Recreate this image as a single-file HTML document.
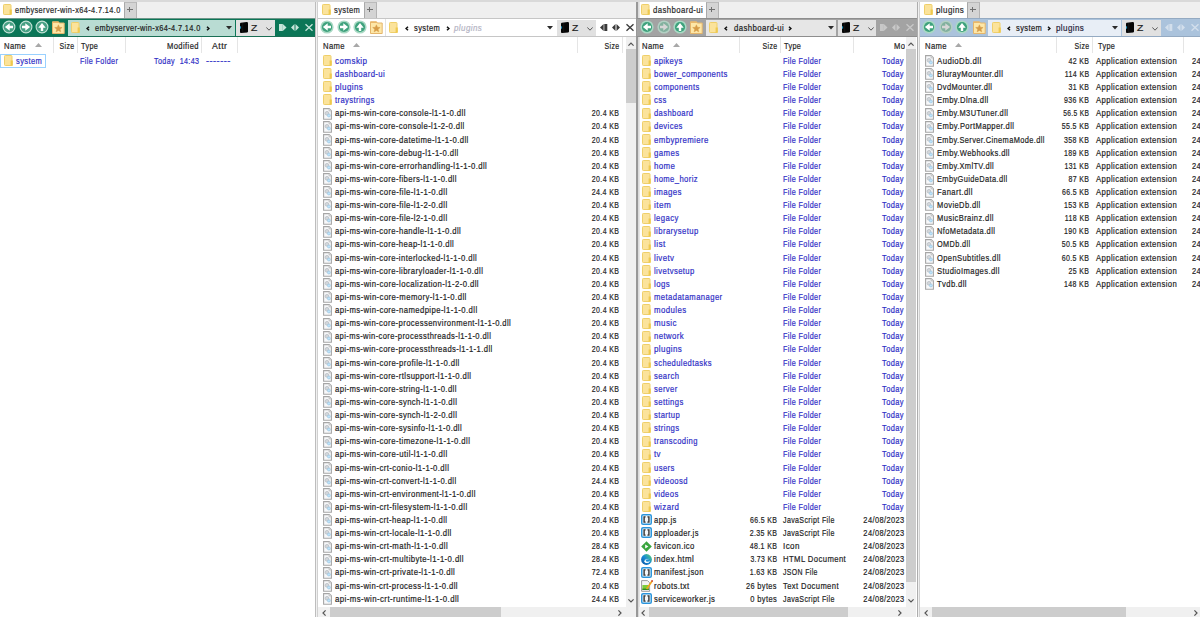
<!DOCTYPE html><html><head><meta charset="utf-8"><style>
html,body{margin:0;padding:0}
body{width:1200px;height:617px;position:relative;overflow:hidden;background:#fff;font-family:"Liberation Sans",sans-serif;font-size:9.5px}
.b{position:absolute}
.t{position:absolute;white-space:pre;line-height:13px;height:13px;transform-origin:0 0;color:#1f1f1f;-webkit-text-stroke:.22px currentColor}
.t.r{transform-origin:100% 0}
.i{position:absolute;overflow:visible}
</style></head><body>
<svg width="0" height="0" style="position:absolute">
<defs>
<symbol id="fold" viewBox="0 0 9 11"><rect x=".5" y=".5" width="7.5" height="10" rx=".8" fill="#fbe39b" stroke="#efcf6a" stroke-width="1"/><rect x="6.6" y="5.5" width="2.2" height="5.3" fill="#efc94e"/></symbol>
<symbol id="dll" viewBox="0 0 9 12"><path d="M.6 .6H6.2L8.4 2.8V11.2H.6Z" fill="#f7f8fa" stroke="#a6a6a6" stroke-width="1.1"/><path d="M6 .6V3H8.4" fill="#ddd" stroke="#b5b5b5" stroke-width=".6"/><circle cx="4" cy="5.3" r="1.9" fill="#d3d7db" stroke="#b4bac0" stroke-width=".7"/><circle cx="5.9" cy="7.5" r="1.5" fill="#bfe4fa" stroke="#93c0de" stroke-width=".6"/></symbol>
<symbol id="js" viewBox="0 0 11 11"><rect x=".75" y=".75" width="9.5" height="9.5" rx="1.3" fill="#f4f8fb" stroke="#2b95dc" stroke-width="1.5"/><path d="M4.6 2.9H3.1V8.1H4.6M6.4 2.9H7.9V8.1H6.4" fill="none" stroke="#333" stroke-width="1.4"/></symbol>
<symbol id="ico" viewBox="0 0 11 11"><path d="M5.5 .2L10.8 5.5L5.5 10.8L.2 5.5Z" fill="#3aa53e"/><path d="M4.2 3.5L7.4 5.5L4.2 7.5Z" fill="#fff"/></symbol>
<symbol id="edge" viewBox="0 0 11 11"><defs><linearGradient id="eg" x1="0" y1="1" x2="1" y2="0"><stop offset="0" stop-color="#0b4f9c"/><stop offset=".5" stop-color="#178ad6"/><stop offset="1" stop-color="#5fd66a"/></linearGradient></defs><circle cx="5.5" cy="5.5" r="5.4" fill="url(#eg)"/><path d="M3.2 7.2Q3.6 4.6 6.4 4.7Q9.6 4.9 10.8 6.6Q10.2 4.8 8.8 4.4Q5.6 3.6 4 5.2Q2.9 6.4 3.2 7.2Z" fill="#3ec7c0" opacity=".6"/><ellipse cx="5.9" cy="7.2" rx="2.5" ry="1.9" fill="#fff"/><ellipse cx="6.6" cy="6.6" rx="1.9" ry="1.2" fill="#1d8fd6"/></symbol>
<symbol id="txt" viewBox="0 0 12 12"><path d="M.6 .6H6.5L8.6 2.7V11.3H.6Z" fill="#f4f4f4" stroke="#9a9a9a" stroke-width="1"/><rect x="1.4" y="5" width="6.4" height="5" fill="#7dcc3a"/><rect x="1.4" y="8.6" width="6.4" height="1.4" fill="#2f8a1f"/><path d="M11.3 .8L5.6 9" stroke="#f1a51c" stroke-width="1.6"/><rect x="10.4" y=".2" width="1.5" height="1.5" fill="#c5333c"/></symbol>
<symbol id="up" viewBox="0 0 6 4"><path d="M.4 3.6L3 1L5.6 3.6" fill="none" stroke="#555" stroke-width="1.2"/></symbol>
<symbol id="dn" viewBox="0 0 6 4"><path d="M.4 .4L3 3L5.6 .4" fill="none" stroke="#555" stroke-width="1.2"/></symbol>
<symbol id="hl" viewBox="0 0 4 6"><path d="M3.6 .4L1 3L3.6 5.6" fill="none" stroke="#555" stroke-width="1.2"/></symbol>
<symbol id="hr" viewBox="0 0 4 6"><path d="M.4 .4L3 3L.4 5.6" fill="none" stroke="#555" stroke-width="1.2"/></symbol>
<symbol id="navL" viewBox="0 0 14 14"><circle cx="7" cy="7" r="6.6" fill="#a9d9c4"/><circle cx="7" cy="7" r="5.1" fill="#3fa27d"/><path d="M2.9 7L7.7 3.3V5.8H11V8.2H7.7V10.7Z" fill="#fff"/></symbol>
<symbol id="navR" viewBox="0 0 14 14"><circle cx="7" cy="7" r="6.6" fill="#a9d9c4"/><circle cx="7" cy="7" r="5.1" fill="#3fa27d"/><path d="M11.1 7L6.3 3.3V5.8H3V8.2H6.3V10.7Z" fill="#fff"/></symbol>
<symbol id="navU" viewBox="0 0 14 14"><circle cx="7" cy="7" r="6.6" fill="#a9d9c4"/><circle cx="7" cy="7" r="5.1" fill="#3fa27d"/><path d="M7 2.9L10.7 7.7H8.2V11H5.8V7.7H3.3Z" fill="#fff"/></symbol>
<symbol id="navRd" viewBox="0 0 14 14"><circle cx="7" cy="7" r="6.6" fill="#b3cfc3"/><circle cx="7" cy="7" r="5.1" fill="#82b19e"/><path d="M11.1 7L6.3 3.3V5.8H3V8.2H6.3V10.7Z" fill="#d6d6d6"/></symbol>
<symbol id="gL" viewBox="0 0 14 14"><circle cx="7" cy="7" r="5.9" fill="#47a084" stroke="#c3e2d6" stroke-width="1.1"/><path d="M2.9 7L7.7 3.3V5.8H11V8.2H7.7V10.7Z" fill="#fff"/></symbol>
<symbol id="gR" viewBox="0 0 14 14"><circle cx="7" cy="7" r="5.9" fill="#47a084" stroke="#c3e2d6" stroke-width="1.1"/><path d="M11.1 7L6.3 3.3V5.8H3V8.2H6.3V10.7Z" fill="#fff"/></symbol>
<symbol id="gU" viewBox="0 0 14 14"><circle cx="7" cy="7" r="5.9" fill="#47a084" stroke="#c3e2d6" stroke-width="1.1"/><path d="M7 2.9L10.7 7.7H8.2V11H5.8V7.7H3.3Z" fill="#fff"/></symbol>
<symbol id="star" viewBox="0 0 13 13"><path d="M.5 .8H6.5L7.3 2H12.2V12.5H.5Z" fill="#fde7a8" stroke="#e5b56a" stroke-width="1"/><path d="M.5 .8H6.5L7.3 2H.5Z" fill="#eab86a"/><path d="M6.40 3.80L7.43 6.28L10.11 6.49L8.06 8.24L8.69 10.86L6.40 9.45L4.11 10.86L4.74 8.24L2.69 6.49L5.37 6.28Z" fill="#d69c48" stroke="#d69c48" stroke-width=".5" stroke-linejoin="round"/></symbol>
<symbol id="drive" viewBox="0 0 8 11"><path d="M0 1.6Q0 .9 .8 .8L6.6 .1Q8 0 8 1.3V9.5Q8 10.3 7.2 10.4L1 11Q0 11 0 10.2Z" fill="#050505"/><rect x="0" y="4.3" width="1.1" height="2.4" fill="#1e90b8"/><rect x="2.6" y="1" width=".5" height="9.6" fill="#222"/></symbol>
<symbol id="lt" viewBox="0 0 4 5"><path d="M3 .7L1.1 2.5L3 4.3" fill="none" stroke="#111" stroke-width="1.5"/></symbol>
<symbol id="gt" viewBox="0 0 4 5"><path d="M1 .7L2.9 2.5L1 4.3" fill="none" stroke="#111" stroke-width="1.5"/></symbol>
<symbol id="tri" viewBox="0 0 6 4"><path d="M0 0H6L3 3.5Z" fill="#2b2b2b"/></symbol>
<symbol id="chev" viewBox="0 0 6 4"><path d="M.3 .4L3 3.2L5.7 .4" fill="none" stroke="#555" stroke-width="1"/></symbol>
<symbol id="sort" viewBox="0 0 7 4"><path d="M0 4L3.5 0L7 4Z" fill="#a8a8a8"/></symbol>
</defs></svg>

<div class="b" style="left:0px;top:0px;width:1200px;height:2px;background:#d9d9d9;"></div>
<div class="b" style="left:0px;top:2px;width:315px;height:16px;background:#efefef;"></div>
<div class="b" style="left:0px;top:2px;width:124px;height:16px;background:#ffffff;"></div>
<svg class="i" style="left:3px;top:4px" width="9" height="11"><use href="#fold"/></svg>
<div class="t " style="top:2.60px;transform:scaleX(0.774);letter-spacing:0.5px;left:14.70px;color:#2a2a2a;">embyserver-win-x64-4.7.14.0</div>
<div class="b" style="left:124px;top:1.5px;width:13px;height:16.5px;background:#d4d4d4;box-sizing:border-box;border-left:1px solid #a9a9a9;border-right:1px solid #b4b4b4;border-top:1px solid #bbbbbb"></div>
<div class="b" style="left:126.9px;top:9px;width:5.8px;height:1.2px;background:#707070;"></div>
<div class="b" style="left:129.2px;top:6.7px;width:1.2px;height:5.8px;background:#707070;"></div>
<div class="b" style="left:318px;top:2px;width:318px;height:16px;background:#efefef;"></div>
<div class="b" style="left:318px;top:2px;width:46px;height:16px;background:#ffffff;"></div>
<svg class="i" style="left:322px;top:4px" width="9" height="11"><use href="#fold"/></svg>
<div class="t " style="top:2.60px;transform:scaleX(0.792);letter-spacing:0.5px;left:333.70px;color:#2a2a2a;">system</div>
<div class="b" style="left:364px;top:1.5px;width:13px;height:16.5px;background:#d4d4d4;box-sizing:border-box;border-left:1px solid #a9a9a9;border-right:1px solid #b4b4b4;border-top:1px solid #bbbbbb"></div>
<div class="b" style="left:366.9px;top:9px;width:5.8px;height:1.2px;background:#707070;"></div>
<div class="b" style="left:369.2px;top:6.7px;width:1.2px;height:5.8px;background:#707070;"></div>
<div class="b" style="left:639px;top:2px;width:278px;height:16px;background:#efefef;"></div>
<div class="b" style="left:639px;top:2px;width:67px;height:16px;background:#ffffff;"></div>
<svg class="i" style="left:641px;top:4px" width="9" height="11"><use href="#fold"/></svg>
<div class="t " style="top:2.60px;transform:scaleX(0.817);letter-spacing:0.5px;left:652.50px;color:#2a2a2a;">dashboard-ui</div>
<div class="b" style="left:706px;top:1.5px;width:13px;height:16.5px;background:#d4d4d4;box-sizing:border-box;border-left:1px solid #a9a9a9;border-right:1px solid #b4b4b4;border-top:1px solid #bbbbbb"></div>
<div class="b" style="left:708.9px;top:9px;width:5.8px;height:1.2px;background:#707070;"></div>
<div class="b" style="left:711.2px;top:6.7px;width:1.2px;height:5.8px;background:#707070;"></div>
<div class="b" style="left:920px;top:2px;width:280px;height:16px;background:#efefef;"></div>
<div class="b" style="left:920px;top:2px;width:47px;height:16px;background:#ffffff;"></div>
<svg class="i" style="left:924.3px;top:4px" width="9" height="11"><use href="#fold"/></svg>
<div class="t " style="top:2.60px;transform:scaleX(0.840);letter-spacing:0.5px;left:935.70px;color:#2a2a2a;">plugins</div>
<div class="b" style="left:967px;top:1.5px;width:13px;height:16.5px;background:#d4d4d4;box-sizing:border-box;border-left:1px solid #a9a9a9;border-right:1px solid #b4b4b4;border-top:1px solid #bbbbbb"></div>
<div class="b" style="left:969.9px;top:9px;width:5.8px;height:1.2px;background:#707070;"></div>
<div class="b" style="left:972.2px;top:6.7px;width:1.2px;height:5.8px;background:#707070;"></div>
<div class="b" style="left:315px;top:2px;width:1px;height:615px;background:#bdbdbd;"></div>
<div class="b" style="left:316px;top:2px;width:1px;height:615px;background:#f0f0f0;"></div>
<div class="b" style="left:317px;top:2px;width:1px;height:615px;background:#d0d0d0;"></div>
<div class="b" style="left:636px;top:2px;width:2px;height:615px;background:#989898;"></div>
<div class="b" style="left:638px;top:2px;width:2px;height:615px;background:linear-gradient(90deg,#d4d4d4,#ececec);"></div>
<div class="b" style="left:917px;top:2px;width:1px;height:615px;background:#adadad;"></div>
<div class="b" style="left:918px;top:2px;width:1px;height:615px;background:#f0f0f0;"></div>
<div class="b" style="left:919px;top:2px;width:1px;height:615px;background:#d0d0d0;"></div>
<div class="b" style="left:0px;top:18px;width:315px;height:19px;background:#0b7657;"></div>
<div class="b" style="left:0px;top:18px;width:315px;height:1px;background:#6f978a;"></div>
<div class="b" style="left:0px;top:36px;width:315px;height:1px;background:#1a6f55;"></div>
<div class="b" style="left:68px;top:20px;width:166.5px;height:15.5px;background:#b9dcd3;"></div>
<div class="b" style="left:236px;top:20px;width:38.5px;height:15.5px;background:#e1e1e1;"></div>
<div class="b" style="left:318px;top:18px;width:318px;height:19px;background:#ffffff;"></div>
<div class="b" style="left:318px;top:18px;width:318px;height:1px;background:#c6c6c6;"></div>
<div class="b" style="left:318px;top:36px;width:318px;height:1px;background:#c6c6c6;"></div>
<div class="b" style="left:386px;top:20px;width:170px;height:15.5px;background:#ffffff;"></div>
<div class="b" style="left:557px;top:20px;width:38.5px;height:15.5px;background:#e1e1e1;"></div>
<div class="b" style="left:637px;top:18px;width:280px;height:19px;background:#a3a3a3;"></div>
<div class="b" style="left:637px;top:18px;width:280px;height:1px;background:#8e8e8e;"></div>
<div class="b" style="left:637px;top:36px;width:280px;height:1px;background:#8e8e8e;"></div>
<div class="b" style="left:706px;top:20px;width:130px;height:15.5px;background:#e6e6e6;"></div>
<div class="b" style="left:838px;top:20px;width:38.299999999999955px;height:15.5px;background:#e1e1e1;"></div>
<div class="b" style="left:920px;top:18px;width:280px;height:19px;background:#abc3dc;"></div>
<div class="b" style="left:920px;top:18px;width:280px;height:1px;background:#94aac2;"></div>
<div class="b" style="left:920px;top:36px;width:280px;height:1px;background:#94aac2;"></div>
<div class="b" style="left:988px;top:20px;width:133px;height:15.5px;background:#e8eef6;"></div>
<div class="b" style="left:1122px;top:20px;width:39px;height:15.5px;background:#e1e1e1;"></div>
<svg class="i" style="left:1.5px;top:20.2px" width="14" height="14"><use href="#gL"/></svg>
<svg class="i" style="left:19px;top:20.2px" width="14" height="14"><use href="#gR"/></svg>
<svg class="i" style="left:34.75px;top:20.2px" width="14" height="14"><use href="#gU"/></svg>
<svg class="i" style="left:52px;top:21px" width="13" height="13"><use href="#star"/></svg>
<svg class="i" style="left:71px;top:22px" width="9" height="11"><use href="#fold"/></svg>
<svg class="i" style="left:86px;top:25.5px" width="4" height="5"><use href="#lt"/></svg>
<div class="t " style="top:20.70px;transform:scaleX(0.774);letter-spacing:0.5px;left:95.00px;color:#1c1c1c;">embyserver-win-x64-4.7.14.0</div>
<svg class="i" style="left:206px;top:25.5px" width="4" height="5"><use href="#gt"/></svg>
<svg class="i" style="left:225.5px;top:26px" width="6" height="4"><use href="#tri"/></svg>
<svg class="i" style="left:240px;top:22px" width="8" height="11"><use href="#drive"/></svg>
<div class="t " style="top:20.70px;transform:scaleX(1.086);letter-spacing:0.5px;left:250.50px;color:#222;">Z</div>
<svg class="i" style="left:265.5px;top:26.5px" width="6" height="4"><use href="#chev"/></svg>
<svg class="i" style="left:279px;top:24px" width="8" height="7" viewBox="0 0 8 7"><rect x="0" y="0" width="3.8" height="7" fill="#c6e5da"/><path d="M3.8 0L7.5 3.5L3.8 7Z" fill="#c6e5da"/><rect x="2.2" y="0" width=".9" height="7" fill="#c6e5da" opacity=".4"/></svg>
<svg class="i" style="left:291px;top:24px" width="8" height="7" viewBox="0 0 8 7"><path d="M3.5 0L0 3.5L3.5 7Z" fill="#c6e5da"/><path d="M4.5 0L8 3.5L4.5 7Z" fill="#c6e5da"/></svg>
<svg class="i" style="left:305px;top:24px" width="8" height="7" viewBox="0 0 8 7"><path d="M.5 .3L7.5 6.7M7.5 .3L.5 6.7" stroke="#c6e5da" stroke-width="1.35"/></svg>
<svg class="i" style="left:320px;top:20.2px" width="14" height="14"><use href="#navL"/></svg>
<svg class="i" style="left:337px;top:20.2px" width="14" height="14"><use href="#navR"/></svg>
<svg class="i" style="left:353px;top:20.2px" width="14" height="14"><use href="#navU"/></svg>
<svg class="i" style="left:370px;top:21px" width="13" height="13"><use href="#star"/></svg>
<div class="b" style="left:385px;top:19px;width:1px;height:17px;background:#e3e3e3;"></div>
<svg class="i" style="left:389px;top:22px" width="9" height="11"><use href="#fold"/></svg>
<svg class="i" style="left:404.5px;top:25.5px" width="4" height="5"><use href="#lt"/></svg>
<div class="t " style="top:20.70px;transform:scaleX(0.792);letter-spacing:0.5px;left:414.00px;color:#1c1c1c;">system</div>
<svg class="i" style="left:445.5px;top:25.5px" width="4" height="5"><use href="#gt"/></svg>
<div class="t " style="top:20.70px;transform:scaleX(0.840);letter-spacing:0.5px;left:454.00px;color:#b4b4c4;font-style:italic">plugins</div>
<svg class="i" style="left:546.5px;top:26px" width="6" height="4"><use href="#tri"/></svg>
<svg class="i" style="left:561px;top:22px" width="8" height="11"><use href="#drive"/></svg>
<div class="t " style="top:20.70px;transform:scaleX(1.086);letter-spacing:0.5px;left:571.50px;color:#222;">Z</div>
<svg class="i" style="left:586.5px;top:26.5px" width="6" height="4"><use href="#chev"/></svg>
<svg class="i" style="left:600px;top:24px" width="8" height="7" viewBox="0 0 8 7"><path d="M3.6 0L0 3.5L3.6 7Z" fill="#3a3a3a"/><rect x="4.3" y="0" width="3" height="7" fill="#3a3a3a"/></svg>
<svg class="i" style="left:612px;top:24px" width="8" height="7" viewBox="0 0 8 7"><path d="M3.5 0L0 3.5L3.5 7Z" fill="#3a3a3a"/><path d="M4.5 0L8 3.5L4.5 7Z" fill="#3a3a3a"/></svg>
<svg class="i" style="left:626px;top:24px" width="8" height="7" viewBox="0 0 8 7"><path d="M.5 .3L7.5 6.7M7.5 .3L.5 6.7" stroke="#3a3a3a" stroke-width="1.35"/></svg>
<svg class="i" style="left:639.8px;top:20.2px" width="14" height="14"><use href="#navL"/></svg>
<svg class="i" style="left:657px;top:20.2px" width="14" height="14"><use href="#navRd"/></svg>
<svg class="i" style="left:672.8px;top:20.2px" width="14" height="14"><use href="#navU"/></svg>
<svg class="i" style="left:690px;top:21px" width="13" height="13"><use href="#star"/></svg>
<svg class="i" style="left:709px;top:22px" width="9" height="11"><use href="#fold"/></svg>
<svg class="i" style="left:724px;top:25.5px" width="4" height="5"><use href="#lt"/></svg>
<div class="t " style="top:20.70px;transform:scaleX(0.817);letter-spacing:0.5px;left:734.00px;color:#1c1c1c;">dashboard-ui</div>
<svg class="i" style="left:787.5px;top:25.5px" width="4" height="5"><use href="#gt"/></svg>
<svg class="i" style="left:827.5px;top:26px" width="6" height="4"><use href="#tri"/></svg>
<svg class="i" style="left:842px;top:22px" width="8" height="11"><use href="#drive"/></svg>
<div class="t " style="top:20.70px;transform:scaleX(1.086);letter-spacing:0.5px;left:852.50px;color:#222;">Z</div>
<svg class="i" style="left:867.5px;top:26.5px" width="6" height="4"><use href="#chev"/></svg>
<svg class="i" style="left:880px;top:24px" width="8" height="7" viewBox="0 0 8 7"><rect x="0" y="0" width="3.8" height="7" fill="#c8c8c8"/><path d="M3.8 0L7.5 3.5L3.8 7Z" fill="#c8c8c8"/><rect x="2.2" y="0" width=".9" height="7" fill="#c8c8c8" opacity=".4"/></svg>
<svg class="i" style="left:892px;top:24px" width="8" height="7" viewBox="0 0 8 7"><path d="M3.5 0L0 3.5L3.5 7Z" fill="#c8c8c8"/><path d="M4.5 0L8 3.5L4.5 7Z" fill="#c8c8c8"/></svg>
<svg class="i" style="left:906px;top:24px" width="8" height="7" viewBox="0 0 8 7"><path d="M.5 .3L7.5 6.7M7.5 .3L.5 6.7" stroke="#c8c8c8" stroke-width="1.35"/></svg>
<svg class="i" style="left:922px;top:20.2px" width="14" height="14"><use href="#navL"/></svg>
<svg class="i" style="left:939px;top:20.2px" width="14" height="14"><use href="#navRd"/></svg>
<svg class="i" style="left:955px;top:20.2px" width="14" height="14"><use href="#navU"/></svg>
<svg class="i" style="left:972.5px;top:21px" width="13" height="13"><use href="#star"/></svg>
<svg class="i" style="left:991.5px;top:22px" width="9" height="11"><use href="#fold"/></svg>
<svg class="i" style="left:1006.5px;top:25.5px" width="4" height="5"><use href="#lt"/></svg>
<div class="t " style="top:20.70px;transform:scaleX(0.792);letter-spacing:0.5px;left:1016.00px;color:#1c1c1c;">system</div>
<svg class="i" style="left:1046.5px;top:25.5px" width="4" height="5"><use href="#gt"/></svg>
<div class="t " style="top:20.70px;transform:scaleX(0.840);letter-spacing:0.5px;left:1056.00px;color:#2a1f3a;">plugins</div>
<svg class="i" style="left:1111.5px;top:26px" width="6" height="4"><use href="#tri"/></svg>
<svg class="i" style="left:1126px;top:22px" width="8" height="11"><use href="#drive"/></svg>
<div class="t " style="top:20.70px;transform:scaleX(1.086);letter-spacing:0.5px;left:1136.50px;color:#222;">Z</div>
<svg class="i" style="left:1151.5px;top:26.5px" width="6" height="4"><use href="#chev"/></svg>
<svg class="i" style="left:1165px;top:24px" width="8" height="7" viewBox="0 0 8 7"><path d="M3.6 0L0 3.5L3.6 7Z" fill="#d3dfec"/><rect x="4.3" y="0" width="3" height="7" fill="#d3dfec"/></svg>
<svg class="i" style="left:1177px;top:24px" width="8" height="7" viewBox="0 0 8 7"><path d="M3.5 0L0 3.5L3.5 7Z" fill="#d3dfec"/><path d="M4.5 0L8 3.5L4.5 7Z" fill="#d3dfec"/></svg>
<svg class="i" style="left:1191px;top:24px" width="8" height="7" viewBox="0 0 8 7"><path d="M.5 .3L7.5 6.7M7.5 .3L.5 6.7" stroke="#d3dfec" stroke-width="1.35"/></svg>
<svg class="i" style="left:34.5px;top:43px" width="7" height="4"><use href="#sort"/></svg>
<svg class="i" style="left:353px;top:43px" width="7" height="4"><use href="#sort"/></svg>
<svg class="i" style="left:672.7px;top:43px" width="7" height="4"><use href="#sort"/></svg>
<svg class="i" style="left:955px;top:43px" width="7" height="4"><use href="#sort"/></svg>
<div class="t " style="top:38.60px;transform:scaleX(0.805);letter-spacing:0.5px;left:4.00px;color:#262626;">Name</div>
<div class="b" style="left:52.5px;top:37px;width:1px;height:16px;background:#e5e5e5;"></div>
<div class="t r " style="top:38.60px;transform:scaleX(0.731);letter-spacing:0.5px;right:1125.83px;color:#262626;">Size</div>
<div class="b" style="left:77px;top:37px;width:1px;height:16px;background:#e5e5e5;"></div>
<div class="t " style="top:38.60px;transform:scaleX(0.765);letter-spacing:0.5px;left:81.00px;color:#262626;">Type</div>
<div class="b" style="left:125px;top:37px;width:1px;height:16px;background:#e5e5e5;"></div>
<div class="t r " style="top:38.60px;transform:scaleX(0.799);letter-spacing:0.5px;right:1000.80px;color:#262626;">Modified</div>
<div class="b" style="left:201px;top:37px;width:1px;height:16px;background:#e5e5e5;"></div>
<div class="t " style="top:38.60px;transform:scaleX(0.915);letter-spacing:0.5px;left:212.30px;color:#262626;">Attr</div>
<div class="b" style="left:237px;top:37px;width:1px;height:16px;background:#e5e5e5;"></div>
<div class="b" style="left:0px;top:54px;width:46px;height:14px;background:transparent;box-sizing:border-box;border:1px solid #99d1ff"></div>
<svg class="i" style="left:4px;top:55px" width="9" height="11"><use href="#fold"/></svg>
<div class="t " style="top:53.80px;transform:scaleX(0.792);letter-spacing:0.5px;left:16.00px;color:#3030c6;">system</div>
<div class="t " style="top:53.80px;transform:scaleX(0.758);letter-spacing:0.5px;left:80.00px;color:#3030c6;">File Folder</div>
<div class="t r " style="top:53.80px;transform:scaleX(0.751);letter-spacing:0.5px;right:1000.82px;color:#3030c6;">Today  14:43</div>
<div class="t " style="top:53.80px;transform:scaleX(0.966);letter-spacing:0.5px;left:206.00px;color:#3030c6;">-------</div>
<div class="t " style="top:38.60px;transform:scaleX(0.805);letter-spacing:0.5px;left:323.00px;color:#262626;">Name</div>
<div class="b" style="left:577px;top:37px;width:1px;height:16px;background:#e5e5e5;"></div>
<div class="t r " style="top:38.60px;transform:scaleX(0.731);letter-spacing:0.5px;right:580.83px;color:#262626;">Size</div>
<div class="b" style="left:621.5px;top:37px;width:1px;height:16px;background:#e5e5e5;"></div>
<svg class="i" style="left:323px;top:55.1px" width="9" height="11"><use href="#fold"/></svg>
<div class="t " style="top:53.80px;transform:scaleX(0.846);letter-spacing:0.5px;left:335.00px;color:#3030c6;">comskip</div>
<svg class="i" style="left:323px;top:68.22px" width="9" height="11"><use href="#fold"/></svg>
<div class="t " style="top:66.92px;transform:scaleX(0.817);letter-spacing:0.5px;left:335.00px;color:#3030c6;">dashboard-ui</div>
<svg class="i" style="left:323px;top:81.33999999999999px" width="9" height="11"><use href="#fold"/></svg>
<div class="t " style="top:80.04px;transform:scaleX(0.840);letter-spacing:0.5px;left:335.00px;color:#3030c6;">plugins</div>
<svg class="i" style="left:323px;top:94.46px" width="9" height="11"><use href="#fold"/></svg>
<div class="t " style="top:93.16px;transform:scaleX(0.803);letter-spacing:0.5px;left:335.00px;color:#3030c6;">traystrings</div>
<svg class="i" style="left:323px;top:107.57999999999998px" width="9" height="12"><use href="#dll"/></svg>
<div class="t " style="top:106.28px;transform:scaleX(0.817);letter-spacing:0.5px;left:335.00px;color:#1f1f1f;">api-ms-win-core-console-l1-1-0.dll</div>
<div class="t r " style="top:106.28px;transform:scaleX(0.736);letter-spacing:0.5px;right:580.83px;color:#1f1f1f;">20.4 KB</div>
<svg class="i" style="left:323px;top:120.69999999999999px" width="9" height="12"><use href="#dll"/></svg>
<div class="t " style="top:119.40px;transform:scaleX(0.810);letter-spacing:0.5px;left:335.00px;color:#1f1f1f;">api-ms-win-core-console-l1-2-0.dll</div>
<div class="t r " style="top:119.40px;transform:scaleX(0.736);letter-spacing:0.5px;right:580.83px;color:#1f1f1f;">20.4 KB</div>
<svg class="i" style="left:323px;top:133.82px" width="9" height="12"><use href="#dll"/></svg>
<div class="t " style="top:132.52px;transform:scaleX(0.814);letter-spacing:0.5px;left:335.00px;color:#1f1f1f;">api-ms-win-core-datetime-l1-1-0.dll</div>
<div class="t r " style="top:132.52px;transform:scaleX(0.736);letter-spacing:0.5px;right:580.83px;color:#1f1f1f;">20.4 KB</div>
<svg class="i" style="left:323px;top:146.93999999999997px" width="9" height="12"><use href="#dll"/></svg>
<div class="t " style="top:145.64px;transform:scaleX(0.810);letter-spacing:0.5px;left:335.00px;color:#1f1f1f;">api-ms-win-core-debug-l1-1-0.dll</div>
<div class="t r " style="top:145.64px;transform:scaleX(0.736);letter-spacing:0.5px;right:580.83px;color:#1f1f1f;">20.4 KB</div>
<svg class="i" style="left:323px;top:160.05999999999997px" width="9" height="12"><use href="#dll"/></svg>
<div class="t " style="top:158.76px;transform:scaleX(0.817);letter-spacing:0.5px;left:335.00px;color:#1f1f1f;">api-ms-win-core-errorhandling-l1-1-0.dll</div>
<div class="t r " style="top:158.76px;transform:scaleX(0.736);letter-spacing:0.5px;right:580.83px;color:#1f1f1f;">20.4 KB</div>
<svg class="i" style="left:323px;top:173.17999999999998px" width="9" height="12"><use href="#dll"/></svg>
<div class="t " style="top:171.88px;transform:scaleX(0.812);letter-spacing:0.5px;left:335.00px;color:#1f1f1f;">api-ms-win-core-fibers-l1-1-0.dll</div>
<div class="t r " style="top:171.88px;transform:scaleX(0.736);letter-spacing:0.5px;right:580.83px;color:#1f1f1f;">20.4 KB</div>
<svg class="i" style="left:323px;top:186.29999999999998px" width="9" height="12"><use href="#dll"/></svg>
<div class="t " style="top:185.00px;transform:scaleX(0.816);letter-spacing:0.5px;left:335.00px;color:#1f1f1f;">api-ms-win-core-file-l1-1-0.dll</div>
<div class="t r " style="top:185.00px;transform:scaleX(0.741);letter-spacing:0.5px;right:580.83px;color:#1f1f1f;">24.4 KB</div>
<svg class="i" style="left:323px;top:199.42px" width="9" height="12"><use href="#dll"/></svg>
<div class="t " style="top:198.12px;transform:scaleX(0.816);letter-spacing:0.5px;left:335.00px;color:#1f1f1f;">api-ms-win-core-file-l1-2-0.dll</div>
<div class="t r " style="top:198.12px;transform:scaleX(0.736);letter-spacing:0.5px;right:580.83px;color:#1f1f1f;">20.4 KB</div>
<svg class="i" style="left:323px;top:212.54px" width="9" height="12"><use href="#dll"/></svg>
<div class="t " style="top:211.24px;transform:scaleX(0.816);letter-spacing:0.5px;left:335.00px;color:#1f1f1f;">api-ms-win-core-file-l2-1-0.dll</div>
<div class="t r " style="top:211.24px;transform:scaleX(0.736);letter-spacing:0.5px;right:580.83px;color:#1f1f1f;">20.4 KB</div>
<svg class="i" style="left:323px;top:225.66px" width="9" height="12"><use href="#dll"/></svg>
<div class="t " style="top:224.36px;transform:scaleX(0.812);letter-spacing:0.5px;left:335.00px;color:#1f1f1f;">api-ms-win-core-handle-l1-1-0.dll</div>
<div class="t r " style="top:224.36px;transform:scaleX(0.736);letter-spacing:0.5px;right:580.83px;color:#1f1f1f;">20.4 KB</div>
<svg class="i" style="left:323px;top:238.77999999999997px" width="9" height="12"><use href="#dll"/></svg>
<div class="t " style="top:237.48px;transform:scaleX(0.811);letter-spacing:0.5px;left:335.00px;color:#1f1f1f;">api-ms-win-core-heap-l1-1-0.dll</div>
<div class="t r " style="top:237.48px;transform:scaleX(0.736);letter-spacing:0.5px;right:580.83px;color:#1f1f1f;">20.4 KB</div>
<svg class="i" style="left:323px;top:251.89999999999998px" width="9" height="12"><use href="#dll"/></svg>
<div class="t " style="top:250.60px;transform:scaleX(0.811);letter-spacing:0.5px;left:335.00px;color:#1f1f1f;">api-ms-win-core-interlocked-l1-1-0.dll</div>
<div class="t r " style="top:250.60px;transform:scaleX(0.736);letter-spacing:0.5px;right:580.83px;color:#1f1f1f;">20.4 KB</div>
<svg class="i" style="left:323px;top:265.02px" width="9" height="12"><use href="#dll"/></svg>
<div class="t " style="top:263.72px;transform:scaleX(0.812);letter-spacing:0.5px;left:335.00px;color:#1f1f1f;">api-ms-win-core-libraryloader-l1-1-0.dll</div>
<div class="t r " style="top:263.72px;transform:scaleX(0.736);letter-spacing:0.5px;right:580.83px;color:#1f1f1f;">20.4 KB</div>
<svg class="i" style="left:323px;top:278.14px" width="9" height="12"><use href="#dll"/></svg>
<div class="t " style="top:276.84px;transform:scaleX(0.814);letter-spacing:0.5px;left:335.00px;color:#1f1f1f;">api-ms-win-core-localization-l1-2-0.dll</div>
<div class="t r " style="top:276.84px;transform:scaleX(0.736);letter-spacing:0.5px;right:580.83px;color:#1f1f1f;">20.4 KB</div>
<svg class="i" style="left:323px;top:291.26px" width="9" height="12"><use href="#dll"/></svg>
<div class="t " style="top:289.96px;transform:scaleX(0.817);letter-spacing:0.5px;left:335.00px;color:#1f1f1f;">api-ms-win-core-memory-l1-1-0.dll</div>
<div class="t r " style="top:289.96px;transform:scaleX(0.736);letter-spacing:0.5px;right:580.83px;color:#1f1f1f;">20.4 KB</div>
<svg class="i" style="left:323px;top:304.38px" width="9" height="12"><use href="#dll"/></svg>
<div class="t " style="top:303.08px;transform:scaleX(0.813);letter-spacing:0.5px;left:335.00px;color:#1f1f1f;">api-ms-win-core-namedpipe-l1-1-0.dll</div>
<div class="t r " style="top:303.08px;transform:scaleX(0.736);letter-spacing:0.5px;right:580.83px;color:#1f1f1f;">20.4 KB</div>
<svg class="i" style="left:323px;top:317.5px" width="9" height="12"><use href="#dll"/></svg>
<div class="t " style="top:316.20px;transform:scaleX(0.807);letter-spacing:0.5px;left:335.00px;color:#1f1f1f;">api-ms-win-core-processenvironment-l1-1-0.dll</div>
<div class="t r " style="top:316.20px;transform:scaleX(0.736);letter-spacing:0.5px;right:580.83px;color:#1f1f1f;">20.4 KB</div>
<svg class="i" style="left:323px;top:330.62px" width="9" height="12"><use href="#dll"/></svg>
<div class="t " style="top:329.32px;transform:scaleX(0.798);letter-spacing:0.5px;left:335.00px;color:#1f1f1f;">api-ms-win-core-processthreads-l1-1-0.dll</div>
<div class="t r " style="top:329.32px;transform:scaleX(0.736);letter-spacing:0.5px;right:580.83px;color:#1f1f1f;">20.4 KB</div>
<svg class="i" style="left:323px;top:343.74px" width="9" height="12"><use href="#dll"/></svg>
<div class="t " style="top:342.44px;transform:scaleX(0.805);letter-spacing:0.5px;left:335.00px;color:#1f1f1f;">api-ms-win-core-processthreads-l1-1-1.dll</div>
<div class="t r " style="top:342.44px;transform:scaleX(0.736);letter-spacing:0.5px;right:580.83px;color:#1f1f1f;">20.4 KB</div>
<svg class="i" style="left:323px;top:356.86px" width="9" height="12"><use href="#dll"/></svg>
<div class="t " style="top:355.56px;transform:scaleX(0.814);letter-spacing:0.5px;left:335.00px;color:#1f1f1f;">api-ms-win-core-profile-l1-1-0.dll</div>
<div class="t r " style="top:355.56px;transform:scaleX(0.736);letter-spacing:0.5px;right:580.83px;color:#1f1f1f;">20.4 KB</div>
<svg class="i" style="left:323px;top:369.98px" width="9" height="12"><use href="#dll"/></svg>
<div class="t " style="top:368.68px;transform:scaleX(0.810);letter-spacing:0.5px;left:335.00px;color:#1f1f1f;">api-ms-win-core-rtlsupport-l1-1-0.dll</div>
<div class="t r " style="top:368.68px;transform:scaleX(0.736);letter-spacing:0.5px;right:580.83px;color:#1f1f1f;">20.4 KB</div>
<svg class="i" style="left:323px;top:383.1px" width="9" height="12"><use href="#dll"/></svg>
<div class="t " style="top:381.80px;transform:scaleX(0.812);letter-spacing:0.5px;left:335.00px;color:#1f1f1f;">api-ms-win-core-string-l1-1-0.dll</div>
<div class="t r " style="top:381.80px;transform:scaleX(0.736);letter-spacing:0.5px;right:580.83px;color:#1f1f1f;">20.4 KB</div>
<svg class="i" style="left:323px;top:396.22px" width="9" height="12"><use href="#dll"/></svg>
<div class="t " style="top:394.92px;transform:scaleX(0.809);letter-spacing:0.5px;left:335.00px;color:#1f1f1f;">api-ms-win-core-synch-l1-1-0.dll</div>
<div class="t r " style="top:394.92px;transform:scaleX(0.736);letter-spacing:0.5px;right:580.83px;color:#1f1f1f;">20.4 KB</div>
<svg class="i" style="left:323px;top:409.34px" width="9" height="12"><use href="#dll"/></svg>
<div class="t " style="top:408.04px;transform:scaleX(0.809);letter-spacing:0.5px;left:335.00px;color:#1f1f1f;">api-ms-win-core-synch-l1-2-0.dll</div>
<div class="t r " style="top:408.04px;transform:scaleX(0.736);letter-spacing:0.5px;right:580.83px;color:#1f1f1f;">20.4 KB</div>
<svg class="i" style="left:323px;top:422.46px" width="9" height="12"><use href="#dll"/></svg>
<div class="t " style="top:421.16px;transform:scaleX(0.810);letter-spacing:0.5px;left:335.00px;color:#1f1f1f;">api-ms-win-core-sysinfo-l1-1-0.dll</div>
<div class="t r " style="top:421.16px;transform:scaleX(0.736);letter-spacing:0.5px;right:580.83px;color:#1f1f1f;">20.4 KB</div>
<svg class="i" style="left:323px;top:435.58px" width="9" height="12"><use href="#dll"/></svg>
<div class="t " style="top:434.28px;transform:scaleX(0.813);letter-spacing:0.5px;left:335.00px;color:#1f1f1f;">api-ms-win-core-timezone-l1-1-0.dll</div>
<div class="t r " style="top:434.28px;transform:scaleX(0.736);letter-spacing:0.5px;right:580.83px;color:#1f1f1f;">20.4 KB</div>
<svg class="i" style="left:323px;top:448.7px" width="9" height="12"><use href="#dll"/></svg>
<div class="t " style="top:447.40px;transform:scaleX(0.816);letter-spacing:0.5px;left:335.00px;color:#1f1f1f;">api-ms-win-core-util-l1-1-0.dll</div>
<div class="t r " style="top:447.40px;transform:scaleX(0.736);letter-spacing:0.5px;right:580.83px;color:#1f1f1f;">20.4 KB</div>
<svg class="i" style="left:323px;top:461.82px" width="9" height="12"><use href="#dll"/></svg>
<div class="t " style="top:460.52px;transform:scaleX(0.813);letter-spacing:0.5px;left:335.00px;color:#1f1f1f;">api-ms-win-crt-conio-l1-1-0.dll</div>
<div class="t r " style="top:460.52px;transform:scaleX(0.736);letter-spacing:0.5px;right:580.83px;color:#1f1f1f;">20.4 KB</div>
<svg class="i" style="left:323px;top:474.94px" width="9" height="12"><use href="#dll"/></svg>
<div class="t " style="top:473.64px;transform:scaleX(0.810);letter-spacing:0.5px;left:335.00px;color:#1f1f1f;">api-ms-win-crt-convert-l1-1-0.dll</div>
<div class="t r " style="top:473.64px;transform:scaleX(0.741);letter-spacing:0.5px;right:580.83px;color:#1f1f1f;">24.4 KB</div>
<svg class="i" style="left:323px;top:488.06px" width="9" height="12"><use href="#dll"/></svg>
<div class="t " style="top:486.76px;transform:scaleX(0.813);letter-spacing:0.5px;left:335.00px;color:#1f1f1f;">api-ms-win-crt-environment-l1-1-0.dll</div>
<div class="t r " style="top:486.76px;transform:scaleX(0.736);letter-spacing:0.5px;right:580.83px;color:#1f1f1f;">20.4 KB</div>
<svg class="i" style="left:323px;top:501.18px" width="9" height="12"><use href="#dll"/></svg>
<div class="t " style="top:499.88px;transform:scaleX(0.815);letter-spacing:0.5px;left:335.00px;color:#1f1f1f;">api-ms-win-crt-filesystem-l1-1-0.dll</div>
<div class="t r " style="top:499.88px;transform:scaleX(0.736);letter-spacing:0.5px;right:580.83px;color:#1f1f1f;">20.4 KB</div>
<svg class="i" style="left:323px;top:514.3000000000001px" width="9" height="12"><use href="#dll"/></svg>
<div class="t " style="top:513.00px;transform:scaleX(0.812);letter-spacing:0.5px;left:335.00px;color:#1f1f1f;">api-ms-win-crt-heap-l1-1-0.dll</div>
<div class="t r " style="top:513.00px;transform:scaleX(0.736);letter-spacing:0.5px;right:580.83px;color:#1f1f1f;">20.4 KB</div>
<svg class="i" style="left:323px;top:527.42px" width="9" height="12"><use href="#dll"/></svg>
<div class="t " style="top:526.12px;transform:scaleX(0.815);letter-spacing:0.5px;left:335.00px;color:#1f1f1f;">api-ms-win-crt-locale-l1-1-0.dll</div>
<div class="t r " style="top:526.12px;transform:scaleX(0.736);letter-spacing:0.5px;right:580.83px;color:#1f1f1f;">20.4 KB</div>
<svg class="i" style="left:323px;top:540.5400000000001px" width="9" height="12"><use href="#dll"/></svg>
<div class="t " style="top:539.24px;transform:scaleX(0.816);letter-spacing:0.5px;left:335.00px;color:#1f1f1f;">api-ms-win-crt-math-l1-1-0.dll</div>
<div class="t r " style="top:539.24px;transform:scaleX(0.741);letter-spacing:0.5px;right:580.83px;color:#1f1f1f;">28.4 KB</div>
<svg class="i" style="left:323px;top:553.66px" width="9" height="12"><use href="#dll"/></svg>
<div class="t " style="top:552.36px;transform:scaleX(0.816);letter-spacing:0.5px;left:335.00px;color:#1f1f1f;">api-ms-win-crt-multibyte-l1-1-0.dll</div>
<div class="t r " style="top:552.36px;transform:scaleX(0.741);letter-spacing:0.5px;right:580.83px;color:#1f1f1f;">28.4 KB</div>
<svg class="i" style="left:323px;top:566.78px" width="9" height="12"><use href="#dll"/></svg>
<div class="t " style="top:565.48px;transform:scaleX(0.815);letter-spacing:0.5px;left:335.00px;color:#1f1f1f;">api-ms-win-crt-private-l1-1-0.dll</div>
<div class="t r " style="top:565.48px;transform:scaleX(0.741);letter-spacing:0.5px;right:580.83px;color:#1f1f1f;">72.4 KB</div>
<svg class="i" style="left:323px;top:579.9px" width="9" height="12"><use href="#dll"/></svg>
<div class="t " style="top:578.60px;transform:scaleX(0.808);letter-spacing:0.5px;left:335.00px;color:#1f1f1f;">api-ms-win-crt-process-l1-1-0.dll</div>
<div class="t r " style="top:578.60px;transform:scaleX(0.736);letter-spacing:0.5px;right:580.83px;color:#1f1f1f;">20.4 KB</div>
<svg class="i" style="left:323px;top:593.02px" width="9" height="12"><use href="#dll"/></svg>
<div class="t " style="top:591.72px;transform:scaleX(0.825);letter-spacing:0.5px;left:335.00px;color:#1f1f1f;">api-ms-win-crt-runtime-l1-1-0.dll</div>
<div class="t r " style="top:591.72px;transform:scaleX(0.741);letter-spacing:0.5px;right:580.83px;color:#1f1f1f;">24.4 KB</div>
<div class="t " style="top:38.60px;transform:scaleX(0.805);letter-spacing:0.5px;left:642.00px;color:#262626;">Name</div>
<div class="b" style="left:739px;top:37px;width:1px;height:16px;background:#e5e5e5;"></div>
<div class="t r " style="top:38.60px;transform:scaleX(0.731);letter-spacing:0.5px;right:422.83px;color:#262626;">Size</div>
<div class="b" style="left:779.5px;top:37px;width:1px;height:16px;background:#e5e5e5;"></div>
<div class="t " style="top:38.60px;transform:scaleX(0.765);letter-spacing:0.5px;left:784.00px;color:#262626;">Type</div>
<div class="b" style="left:853px;top:37px;width:1px;height:16px;background:#e5e5e5;"></div>
<div class="b" style="left:0;top:0;width:905px;height:617px;overflow:hidden">
<div class="t " style="top:38.60px;transform:scaleX(0.799);letter-spacing:0.5px;left:893.50px;color:#262626;">Modified</div>
</div>
<svg class="i" style="left:642px;top:55.1px" width="9" height="11"><use href="#fold"/></svg>
<div class="t " style="top:53.80px;transform:scaleX(0.801);letter-spacing:0.5px;left:654.00px;color:#3030c6;">apikeys</div>
<div class="t " style="top:53.80px;transform:scaleX(0.758);letter-spacing:0.5px;left:783.00px;color:#3030c6;">File Folder</div>
<div class="t r " style="top:53.80px;transform:scaleX(0.783);letter-spacing:0.5px;right:295.81px;color:#3030c6;">Today</div>
<svg class="i" style="left:642px;top:68.22px" width="9" height="11"><use href="#fold"/></svg>
<div class="t " style="top:66.92px;transform:scaleX(0.812);letter-spacing:0.5px;left:654.00px;color:#3030c6;">bower_components</div>
<div class="t " style="top:66.92px;transform:scaleX(0.758);letter-spacing:0.5px;left:783.00px;color:#3030c6;">File Folder</div>
<div class="t r " style="top:66.92px;transform:scaleX(0.783);letter-spacing:0.5px;right:295.81px;color:#3030c6;">Today</div>
<svg class="i" style="left:642px;top:81.33999999999999px" width="9" height="11"><use href="#fold"/></svg>
<div class="t " style="top:80.04px;transform:scaleX(0.807);letter-spacing:0.5px;left:654.00px;color:#3030c6;">components</div>
<div class="t " style="top:80.04px;transform:scaleX(0.758);letter-spacing:0.5px;left:783.00px;color:#3030c6;">File Folder</div>
<div class="t r " style="top:80.04px;transform:scaleX(0.783);letter-spacing:0.5px;right:295.81px;color:#3030c6;">Today</div>
<svg class="i" style="left:642px;top:94.46px" width="9" height="11"><use href="#fold"/></svg>
<div class="t " style="top:93.16px;transform:scaleX(0.809);letter-spacing:0.5px;left:654.00px;color:#3030c6;">css</div>
<div class="t " style="top:93.16px;transform:scaleX(0.758);letter-spacing:0.5px;left:783.00px;color:#3030c6;">File Folder</div>
<div class="t r " style="top:93.16px;transform:scaleX(0.783);letter-spacing:0.5px;right:295.81px;color:#3030c6;">Today</div>
<svg class="i" style="left:642px;top:107.57999999999998px" width="9" height="11"><use href="#fold"/></svg>
<div class="t " style="top:106.28px;transform:scaleX(0.799);letter-spacing:0.5px;left:654.00px;color:#3030c6;">dashboard</div>
<div class="t " style="top:106.28px;transform:scaleX(0.758);letter-spacing:0.5px;left:783.00px;color:#3030c6;">File Folder</div>
<div class="t r " style="top:106.28px;transform:scaleX(0.783);letter-spacing:0.5px;right:295.81px;color:#3030c6;">Today</div>
<svg class="i" style="left:642px;top:120.69999999999999px" width="9" height="11"><use href="#fold"/></svg>
<div class="t " style="top:119.40px;transform:scaleX(0.808);letter-spacing:0.5px;left:654.00px;color:#3030c6;">devices</div>
<div class="t " style="top:119.40px;transform:scaleX(0.758);letter-spacing:0.5px;left:783.00px;color:#3030c6;">File Folder</div>
<div class="t r " style="top:119.40px;transform:scaleX(0.783);letter-spacing:0.5px;right:295.81px;color:#3030c6;">Today</div>
<svg class="i" style="left:642px;top:133.82px" width="9" height="11"><use href="#fold"/></svg>
<div class="t " style="top:132.52px;transform:scaleX(0.820);letter-spacing:0.5px;left:654.00px;color:#3030c6;">embypremiere</div>
<div class="t " style="top:132.52px;transform:scaleX(0.758);letter-spacing:0.5px;left:783.00px;color:#3030c6;">File Folder</div>
<div class="t r " style="top:132.52px;transform:scaleX(0.783);letter-spacing:0.5px;right:295.81px;color:#3030c6;">Today</div>
<svg class="i" style="left:642px;top:146.93999999999997px" width="9" height="11"><use href="#fold"/></svg>
<div class="t " style="top:145.64px;transform:scaleX(0.823);letter-spacing:0.5px;left:654.00px;color:#3030c6;">games</div>
<div class="t " style="top:145.64px;transform:scaleX(0.758);letter-spacing:0.5px;left:783.00px;color:#3030c6;">File Folder</div>
<div class="t r " style="top:145.64px;transform:scaleX(0.783);letter-spacing:0.5px;right:295.81px;color:#3030c6;">Today</div>
<svg class="i" style="left:642px;top:160.05999999999997px" width="9" height="11"><use href="#fold"/></svg>
<div class="t " style="top:158.76px;transform:scaleX(0.831);letter-spacing:0.5px;left:654.00px;color:#3030c6;">home</div>
<div class="t " style="top:158.76px;transform:scaleX(0.758);letter-spacing:0.5px;left:783.00px;color:#3030c6;">File Folder</div>
<div class="t r " style="top:158.76px;transform:scaleX(0.783);letter-spacing:0.5px;right:295.81px;color:#3030c6;">Today</div>
<svg class="i" style="left:642px;top:173.17999999999998px" width="9" height="11"><use href="#fold"/></svg>
<div class="t " style="top:171.88px;transform:scaleX(0.805);letter-spacing:0.5px;left:654.00px;color:#3030c6;">home_horiz</div>
<div class="t " style="top:171.88px;transform:scaleX(0.758);letter-spacing:0.5px;left:783.00px;color:#3030c6;">File Folder</div>
<div class="t r " style="top:171.88px;transform:scaleX(0.783);letter-spacing:0.5px;right:295.81px;color:#3030c6;">Today</div>
<svg class="i" style="left:642px;top:186.29999999999998px" width="9" height="11"><use href="#fold"/></svg>
<div class="t " style="top:185.00px;transform:scaleX(0.830);letter-spacing:0.5px;left:654.00px;color:#3030c6;">images</div>
<div class="t " style="top:185.00px;transform:scaleX(0.758);letter-spacing:0.5px;left:783.00px;color:#3030c6;">File Folder</div>
<div class="t r " style="top:185.00px;transform:scaleX(0.783);letter-spacing:0.5px;right:295.81px;color:#3030c6;">Today</div>
<svg class="i" style="left:642px;top:199.42px" width="9" height="11"><use href="#fold"/></svg>
<div class="t " style="top:198.12px;transform:scaleX(0.857);letter-spacing:0.5px;left:654.00px;color:#3030c6;">item</div>
<div class="t " style="top:198.12px;transform:scaleX(0.758);letter-spacing:0.5px;left:783.00px;color:#3030c6;">File Folder</div>
<div class="t r " style="top:198.12px;transform:scaleX(0.783);letter-spacing:0.5px;right:295.81px;color:#3030c6;">Today</div>
<svg class="i" style="left:642px;top:212.54px" width="9" height="11"><use href="#fold"/></svg>
<div class="t " style="top:211.24px;transform:scaleX(0.812);letter-spacing:0.5px;left:654.00px;color:#3030c6;">legacy</div>
<div class="t " style="top:211.24px;transform:scaleX(0.758);letter-spacing:0.5px;left:783.00px;color:#3030c6;">File Folder</div>
<div class="t r " style="top:211.24px;transform:scaleX(0.783);letter-spacing:0.5px;right:295.81px;color:#3030c6;">Today</div>
<svg class="i" style="left:642px;top:225.66px" width="9" height="11"><use href="#fold"/></svg>
<div class="t " style="top:224.36px;transform:scaleX(0.810);letter-spacing:0.5px;left:654.00px;color:#3030c6;">librarysetup</div>
<div class="t " style="top:224.36px;transform:scaleX(0.758);letter-spacing:0.5px;left:783.00px;color:#3030c6;">File Folder</div>
<div class="t r " style="top:224.36px;transform:scaleX(0.783);letter-spacing:0.5px;right:295.81px;color:#3030c6;">Today</div>
<svg class="i" style="left:642px;top:238.77999999999997px" width="9" height="11"><use href="#fold"/></svg>
<div class="t " style="top:237.48px;transform:scaleX(0.864);letter-spacing:0.5px;left:654.00px;color:#3030c6;">list</div>
<div class="t " style="top:237.48px;transform:scaleX(0.758);letter-spacing:0.5px;left:783.00px;color:#3030c6;">File Folder</div>
<div class="t r " style="top:237.48px;transform:scaleX(0.783);letter-spacing:0.5px;right:295.81px;color:#3030c6;">Today</div>
<svg class="i" style="left:642px;top:251.89999999999998px" width="9" height="11"><use href="#fold"/></svg>
<div class="t " style="top:250.60px;transform:scaleX(0.829);letter-spacing:0.5px;left:654.00px;color:#3030c6;">livetv</div>
<div class="t " style="top:250.60px;transform:scaleX(0.758);letter-spacing:0.5px;left:783.00px;color:#3030c6;">File Folder</div>
<div class="t r " style="top:250.60px;transform:scaleX(0.783);letter-spacing:0.5px;right:295.81px;color:#3030c6;">Today</div>
<svg class="i" style="left:642px;top:265.02px" width="9" height="11"><use href="#fold"/></svg>
<div class="t " style="top:263.72px;transform:scaleX(0.808);letter-spacing:0.5px;left:654.00px;color:#3030c6;">livetvsetup</div>
<div class="t " style="top:263.72px;transform:scaleX(0.758);letter-spacing:0.5px;left:783.00px;color:#3030c6;">File Folder</div>
<div class="t r " style="top:263.72px;transform:scaleX(0.783);letter-spacing:0.5px;right:295.81px;color:#3030c6;">Today</div>
<svg class="i" style="left:642px;top:278.14px" width="9" height="11"><use href="#fold"/></svg>
<div class="t " style="top:276.84px;transform:scaleX(0.826);letter-spacing:0.5px;left:654.00px;color:#3030c6;">logs</div>
<div class="t " style="top:276.84px;transform:scaleX(0.758);letter-spacing:0.5px;left:783.00px;color:#3030c6;">File Folder</div>
<div class="t r " style="top:276.84px;transform:scaleX(0.783);letter-spacing:0.5px;right:295.81px;color:#3030c6;">Today</div>
<svg class="i" style="left:642px;top:291.26px" width="9" height="11"><use href="#fold"/></svg>
<div class="t " style="top:289.96px;transform:scaleX(0.810);letter-spacing:0.5px;left:654.00px;color:#3030c6;">metadatamanager</div>
<div class="t " style="top:289.96px;transform:scaleX(0.758);letter-spacing:0.5px;left:783.00px;color:#3030c6;">File Folder</div>
<div class="t r " style="top:289.96px;transform:scaleX(0.783);letter-spacing:0.5px;right:295.81px;color:#3030c6;">Today</div>
<svg class="i" style="left:642px;top:304.38px" width="9" height="11"><use href="#fold"/></svg>
<div class="t " style="top:303.08px;transform:scaleX(0.824);letter-spacing:0.5px;left:654.00px;color:#3030c6;">modules</div>
<div class="t " style="top:303.08px;transform:scaleX(0.758);letter-spacing:0.5px;left:783.00px;color:#3030c6;">File Folder</div>
<div class="t r " style="top:303.08px;transform:scaleX(0.783);letter-spacing:0.5px;right:295.81px;color:#3030c6;">Today</div>
<svg class="i" style="left:642px;top:317.5px" width="9" height="11"><use href="#fold"/></svg>
<div class="t " style="top:316.20px;transform:scaleX(0.837);letter-spacing:0.5px;left:654.00px;color:#3030c6;">music</div>
<div class="t " style="top:316.20px;transform:scaleX(0.758);letter-spacing:0.5px;left:783.00px;color:#3030c6;">File Folder</div>
<div class="t r " style="top:316.20px;transform:scaleX(0.783);letter-spacing:0.5px;right:295.81px;color:#3030c6;">Today</div>
<svg class="i" style="left:642px;top:330.62px" width="9" height="11"><use href="#fold"/></svg>
<div class="t " style="top:329.32px;transform:scaleX(0.815);letter-spacing:0.5px;left:654.00px;color:#3030c6;">network</div>
<div class="t " style="top:329.32px;transform:scaleX(0.758);letter-spacing:0.5px;left:783.00px;color:#3030c6;">File Folder</div>
<div class="t r " style="top:329.32px;transform:scaleX(0.783);letter-spacing:0.5px;right:295.81px;color:#3030c6;">Today</div>
<svg class="i" style="left:642px;top:343.74px" width="9" height="11"><use href="#fold"/></svg>
<div class="t " style="top:342.44px;transform:scaleX(0.840);letter-spacing:0.5px;left:654.00px;color:#3030c6;">plugins</div>
<div class="t " style="top:342.44px;transform:scaleX(0.758);letter-spacing:0.5px;left:783.00px;color:#3030c6;">File Folder</div>
<div class="t r " style="top:342.44px;transform:scaleX(0.783);letter-spacing:0.5px;right:295.81px;color:#3030c6;">Today</div>
<svg class="i" style="left:642px;top:356.86px" width="9" height="11"><use href="#fold"/></svg>
<div class="t " style="top:355.56px;transform:scaleX(0.798);letter-spacing:0.5px;left:654.00px;color:#3030c6;">scheduledtasks</div>
<div class="t " style="top:355.56px;transform:scaleX(0.758);letter-spacing:0.5px;left:783.00px;color:#3030c6;">File Folder</div>
<div class="t r " style="top:355.56px;transform:scaleX(0.783);letter-spacing:0.5px;right:295.81px;color:#3030c6;">Today</div>
<svg class="i" style="left:642px;top:369.98px" width="9" height="11"><use href="#fold"/></svg>
<div class="t " style="top:368.68px;transform:scaleX(0.803);letter-spacing:0.5px;left:654.00px;color:#3030c6;">search</div>
<div class="t " style="top:368.68px;transform:scaleX(0.758);letter-spacing:0.5px;left:783.00px;color:#3030c6;">File Folder</div>
<div class="t r " style="top:368.68px;transform:scaleX(0.783);letter-spacing:0.5px;right:295.81px;color:#3030c6;">Today</div>
<svg class="i" style="left:642px;top:383.1px" width="9" height="11"><use href="#fold"/></svg>
<div class="t " style="top:381.80px;transform:scaleX(0.805);letter-spacing:0.5px;left:654.00px;color:#3030c6;">server</div>
<div class="t " style="top:381.80px;transform:scaleX(0.758);letter-spacing:0.5px;left:783.00px;color:#3030c6;">File Folder</div>
<div class="t r " style="top:381.80px;transform:scaleX(0.783);letter-spacing:0.5px;right:295.81px;color:#3030c6;">Today</div>
<svg class="i" style="left:642px;top:396.22px" width="9" height="11"><use href="#fold"/></svg>
<div class="t " style="top:394.92px;transform:scaleX(0.807);letter-spacing:0.5px;left:654.00px;color:#3030c6;">settings</div>
<div class="t " style="top:394.92px;transform:scaleX(0.758);letter-spacing:0.5px;left:783.00px;color:#3030c6;">File Folder</div>
<div class="t r " style="top:394.92px;transform:scaleX(0.783);letter-spacing:0.5px;right:295.81px;color:#3030c6;">Today</div>
<svg class="i" style="left:642px;top:409.34px" width="9" height="11"><use href="#fold"/></svg>
<div class="t " style="top:408.04px;transform:scaleX(0.802);letter-spacing:0.5px;left:654.00px;color:#3030c6;">startup</div>
<div class="t " style="top:408.04px;transform:scaleX(0.758);letter-spacing:0.5px;left:783.00px;color:#3030c6;">File Folder</div>
<div class="t r " style="top:408.04px;transform:scaleX(0.783);letter-spacing:0.5px;right:295.81px;color:#3030c6;">Today</div>
<svg class="i" style="left:642px;top:422.46px" width="9" height="11"><use href="#fold"/></svg>
<div class="t " style="top:421.16px;transform:scaleX(0.812);letter-spacing:0.5px;left:654.00px;color:#3030c6;">strings</div>
<div class="t " style="top:421.16px;transform:scaleX(0.758);letter-spacing:0.5px;left:783.00px;color:#3030c6;">File Folder</div>
<div class="t r " style="top:421.16px;transform:scaleX(0.783);letter-spacing:0.5px;right:295.81px;color:#3030c6;">Today</div>
<svg class="i" style="left:642px;top:435.58px" width="9" height="11"><use href="#fold"/></svg>
<div class="t " style="top:434.28px;transform:scaleX(0.803);letter-spacing:0.5px;left:654.00px;color:#3030c6;">transcoding</div>
<div class="t " style="top:434.28px;transform:scaleX(0.758);letter-spacing:0.5px;left:783.00px;color:#3030c6;">File Folder</div>
<div class="t r " style="top:434.28px;transform:scaleX(0.783);letter-spacing:0.5px;right:295.81px;color:#3030c6;">Today</div>
<svg class="i" style="left:642px;top:448.7px" width="9" height="11"><use href="#fold"/></svg>
<div class="t " style="top:447.40px;transform:scaleX(0.833);letter-spacing:0.5px;left:654.00px;color:#3030c6;">tv</div>
<div class="t " style="top:447.40px;transform:scaleX(0.758);letter-spacing:0.5px;left:783.00px;color:#3030c6;">File Folder</div>
<div class="t r " style="top:447.40px;transform:scaleX(0.783);letter-spacing:0.5px;right:295.81px;color:#3030c6;">Today</div>
<svg class="i" style="left:642px;top:461.82px" width="9" height="11"><use href="#fold"/></svg>
<div class="t " style="top:460.52px;transform:scaleX(0.806);letter-spacing:0.5px;left:654.00px;color:#3030c6;">users</div>
<div class="t " style="top:460.52px;transform:scaleX(0.758);letter-spacing:0.5px;left:783.00px;color:#3030c6;">File Folder</div>
<div class="t r " style="top:460.52px;transform:scaleX(0.783);letter-spacing:0.5px;right:295.81px;color:#3030c6;">Today</div>
<svg class="i" style="left:642px;top:474.94px" width="9" height="11"><use href="#fold"/></svg>
<div class="t " style="top:473.64px;transform:scaleX(0.806);letter-spacing:0.5px;left:654.00px;color:#3030c6;">videoosd</div>
<div class="t " style="top:473.64px;transform:scaleX(0.758);letter-spacing:0.5px;left:783.00px;color:#3030c6;">File Folder</div>
<div class="t r " style="top:473.64px;transform:scaleX(0.783);letter-spacing:0.5px;right:295.81px;color:#3030c6;">Today</div>
<svg class="i" style="left:642px;top:488.06px" width="9" height="11"><use href="#fold"/></svg>
<div class="t " style="top:486.76px;transform:scaleX(0.812);letter-spacing:0.5px;left:654.00px;color:#3030c6;">videos</div>
<div class="t " style="top:486.76px;transform:scaleX(0.758);letter-spacing:0.5px;left:783.00px;color:#3030c6;">File Folder</div>
<div class="t r " style="top:486.76px;transform:scaleX(0.783);letter-spacing:0.5px;right:295.81px;color:#3030c6;">Today</div>
<svg class="i" style="left:642px;top:501.18px" width="9" height="11"><use href="#fold"/></svg>
<div class="t " style="top:499.88px;transform:scaleX(0.831);letter-spacing:0.5px;left:654.00px;color:#3030c6;">wizard</div>
<div class="t " style="top:499.88px;transform:scaleX(0.758);letter-spacing:0.5px;left:783.00px;color:#3030c6;">File Folder</div>
<div class="t r " style="top:499.88px;transform:scaleX(0.783);letter-spacing:0.5px;right:295.81px;color:#3030c6;">Today</div>
<svg class="i" style="left:641px;top:514.3000000000001px" width="11" height="11"><use href="#js"/></svg>
<div class="t " style="top:513.00px;transform:scaleX(0.801);letter-spacing:0.5px;left:654.00px;color:#1f1f1f;">app.js</div>
<div class="t r " style="top:513.00px;transform:scaleX(0.734);letter-spacing:0.5px;right:422.83px;color:#1f1f1f;">66.5 KB</div>
<div class="t " style="top:513.00px;transform:scaleX(0.742);letter-spacing:0.5px;left:783.00px;color:#1f1f1f;">JavaScript File</div>
<div class="t r " style="top:513.00px;transform:scaleX(0.784);letter-spacing:0.5px;right:295.81px;color:#1f1f1f;">24/08/2023</div>
<svg class="i" style="left:641px;top:527.42px" width="11" height="11"><use href="#js"/></svg>
<div class="t " style="top:526.12px;transform:scaleX(0.782);letter-spacing:0.5px;left:654.00px;color:#1f1f1f;">apploader.js</div>
<div class="t r " style="top:526.12px;transform:scaleX(0.741);letter-spacing:0.5px;right:422.83px;color:#1f1f1f;">2.35 KB</div>
<div class="t " style="top:526.12px;transform:scaleX(0.742);letter-spacing:0.5px;left:783.00px;color:#1f1f1f;">JavaScript File</div>
<div class="t r " style="top:526.12px;transform:scaleX(0.784);letter-spacing:0.5px;right:295.81px;color:#1f1f1f;">24/08/2023</div>
<svg class="i" style="left:641px;top:540.5400000000001px" width="11" height="11"><use href="#ico"/></svg>
<div class="t " style="top:539.24px;transform:scaleX(0.808);letter-spacing:0.5px;left:654.00px;color:#1f1f1f;">favicon.ico</div>
<div class="t r " style="top:539.24px;transform:scaleX(0.741);letter-spacing:0.5px;right:422.83px;color:#1f1f1f;">48.1 KB</div>
<div class="t " style="top:539.24px;transform:scaleX(0.843);letter-spacing:0.5px;left:783.00px;color:#1f1f1f;">Icon</div>
<div class="t r " style="top:539.24px;transform:scaleX(0.784);letter-spacing:0.5px;right:295.81px;color:#1f1f1f;">24/08/2023</div>
<svg class="i" style="left:641px;top:553.66px" width="11" height="11"><use href="#edge"/></svg>
<div class="t " style="top:552.36px;transform:scaleX(0.831);letter-spacing:0.5px;left:654.00px;color:#1f1f1f;">index.html</div>
<div class="t r " style="top:552.36px;transform:scaleX(0.720);letter-spacing:0.5px;right:422.84px;color:#1f1f1f;">3.73 KB</div>
<div class="t " style="top:552.36px;transform:scaleX(0.810);letter-spacing:0.5px;left:783.00px;color:#1f1f1f;">HTML Document</div>
<div class="t r " style="top:552.36px;transform:scaleX(0.784);letter-spacing:0.5px;right:295.81px;color:#1f1f1f;">24/08/2023</div>
<svg class="i" style="left:641px;top:566.78px" width="11" height="11"><use href="#js"/></svg>
<div class="t " style="top:565.48px;transform:scaleX(0.797);letter-spacing:0.5px;left:654.00px;color:#1f1f1f;">manifest.json</div>
<div class="t r " style="top:565.48px;transform:scaleX(0.741);letter-spacing:0.5px;right:422.83px;color:#1f1f1f;">1.63 KB</div>
<div class="t " style="top:565.48px;transform:scaleX(0.728);letter-spacing:0.5px;left:783.00px;color:#1f1f1f;">JSON File</div>
<div class="t r " style="top:565.48px;transform:scaleX(0.784);letter-spacing:0.5px;right:295.81px;color:#1f1f1f;">24/08/2023</div>
<svg class="i" style="left:641px;top:579.9px" width="12" height="12"><use href="#txt"/></svg>
<div class="t " style="top:578.60px;transform:scaleX(0.808);letter-spacing:0.5px;left:654.00px;color:#1f1f1f;">robots.txt</div>
<div class="t r " style="top:578.60px;transform:scaleX(0.776);letter-spacing:0.5px;right:422.81px;color:#1f1f1f;">26 bytes</div>
<div class="t " style="top:578.60px;transform:scaleX(0.800);letter-spacing:0.5px;left:783.00px;color:#1f1f1f;">Text Document</div>
<div class="t r " style="top:578.60px;transform:scaleX(0.784);letter-spacing:0.5px;right:295.81px;color:#1f1f1f;">24/08/2023</div>
<svg class="i" style="left:641px;top:593.02px" width="11" height="11"><use href="#js"/></svg>
<div class="t " style="top:591.72px;transform:scaleX(0.811);letter-spacing:0.5px;left:654.00px;color:#1f1f1f;">serviceworker.js</div>
<div class="t r " style="top:591.72px;transform:scaleX(0.790);letter-spacing:0.5px;right:422.80px;color:#1f1f1f;">0 bytes</div>
<div class="t " style="top:591.72px;transform:scaleX(0.742);letter-spacing:0.5px;left:783.00px;color:#1f1f1f;">JavaScript File</div>
<div class="t r " style="top:591.72px;transform:scaleX(0.784);letter-spacing:0.5px;right:295.81px;color:#1f1f1f;">24/08/2023</div>
<div class="t " style="top:38.60px;transform:scaleX(0.805);letter-spacing:0.5px;left:925.00px;color:#262626;">Name</div>
<div class="b" style="left:1055.5px;top:37px;width:1px;height:16px;background:#e5e5e5;"></div>
<div class="t r " style="top:38.60px;transform:scaleX(0.731);letter-spacing:0.5px;right:110.83px;color:#262626;">Size</div>
<div class="b" style="left:1092.2px;top:37px;width:1px;height:16px;background:#e5e5e5;"></div>
<div class="t " style="top:38.60px;transform:scaleX(0.765);letter-spacing:0.5px;left:1097.50px;color:#262626;">Type</div>
<div class="b" style="left:1183.4px;top:37px;width:1px;height:16px;background:#e5e5e5;"></div>
<svg class="i" style="left:925px;top:55.1px" width="9" height="12"><use href="#dll"/></svg>
<div class="t " style="top:53.80px;transform:scaleX(0.825);letter-spacing:0.5px;left:937.00px;color:#1f1f1f;">AudioDb.dll</div>
<div class="t r " style="top:53.80px;transform:scaleX(0.736);letter-spacing:0.5px;right:110.83px;color:#1f1f1f;">42 KB</div>
<div class="t " style="top:53.80px;transform:scaleX(0.810);letter-spacing:0.5px;left:1096.00px;color:#1f1f1f;">Application extension</div>
<div class="t " style="top:53.80px;transform:scaleX(0.784);letter-spacing:0.5px;left:1192.00px;color:#1f1f1f;">24/08/2023</div>
<svg class="i" style="left:925px;top:68.22px" width="9" height="12"><use href="#dll"/></svg>
<div class="t " style="top:66.92px;transform:scaleX(0.809);letter-spacing:0.5px;left:937.00px;color:#1f1f1f;">BlurayMounter.dll</div>
<div class="t r " style="top:66.92px;transform:scaleX(0.735);letter-spacing:0.5px;right:110.83px;color:#1f1f1f;">114 KB</div>
<div class="t " style="top:66.92px;transform:scaleX(0.810);letter-spacing:0.5px;left:1096.00px;color:#1f1f1f;">Application extension</div>
<div class="t " style="top:66.92px;transform:scaleX(0.784);letter-spacing:0.5px;left:1192.00px;color:#1f1f1f;">24/08/2023</div>
<svg class="i" style="left:925px;top:81.33999999999999px" width="9" height="12"><use href="#dll"/></svg>
<div class="t " style="top:80.04px;transform:scaleX(0.787);letter-spacing:0.5px;left:937.00px;color:#1f1f1f;">DvdMounter.dll</div>
<div class="t r " style="top:80.04px;transform:scaleX(0.736);letter-spacing:0.5px;right:110.83px;color:#1f1f1f;">31 KB</div>
<div class="t " style="top:80.04px;transform:scaleX(0.810);letter-spacing:0.5px;left:1096.00px;color:#1f1f1f;">Application extension</div>
<div class="t " style="top:80.04px;transform:scaleX(0.784);letter-spacing:0.5px;left:1192.00px;color:#1f1f1f;">24/08/2023</div>
<svg class="i" style="left:925px;top:94.46px" width="9" height="12"><use href="#dll"/></svg>
<div class="t " style="top:93.16px;transform:scaleX(0.802);letter-spacing:0.5px;left:937.00px;color:#1f1f1f;">Emby.Dlna.dll</div>
<div class="t r " style="top:93.16px;transform:scaleX(0.735);letter-spacing:0.5px;right:110.83px;color:#1f1f1f;">936 KB</div>
<div class="t " style="top:93.16px;transform:scaleX(0.810);letter-spacing:0.5px;left:1096.00px;color:#1f1f1f;">Application extension</div>
<div class="t " style="top:93.16px;transform:scaleX(0.784);letter-spacing:0.5px;left:1192.00px;color:#1f1f1f;">24/08/2023</div>
<svg class="i" style="left:925px;top:107.57999999999998px" width="9" height="12"><use href="#dll"/></svg>
<div class="t " style="top:106.28px;transform:scaleX(0.784);letter-spacing:0.5px;left:937.00px;color:#1f1f1f;">Emby.M3UTuner.dll</div>
<div class="t r " style="top:106.28px;transform:scaleX(0.701);letter-spacing:0.5px;right:110.85px;color:#1f1f1f;">56.5 KB</div>
<div class="t " style="top:106.28px;transform:scaleX(0.810);letter-spacing:0.5px;left:1096.00px;color:#1f1f1f;">Application extension</div>
<div class="t " style="top:106.28px;transform:scaleX(0.784);letter-spacing:0.5px;left:1192.00px;color:#1f1f1f;">24/08/2023</div>
<svg class="i" style="left:925px;top:120.69999999999999px" width="9" height="12"><use href="#dll"/></svg>
<div class="t " style="top:119.40px;transform:scaleX(0.798);letter-spacing:0.5px;left:937.00px;color:#1f1f1f;">Emby.PortMapper.dll</div>
<div class="t r " style="top:119.40px;transform:scaleX(0.741);letter-spacing:0.5px;right:110.83px;color:#1f1f1f;">55.5 KB</div>
<div class="t " style="top:119.40px;transform:scaleX(0.810);letter-spacing:0.5px;left:1096.00px;color:#1f1f1f;">Application extension</div>
<div class="t " style="top:119.40px;transform:scaleX(0.784);letter-spacing:0.5px;left:1192.00px;color:#1f1f1f;">24/08/2023</div>
<svg class="i" style="left:925px;top:133.82px" width="9" height="12"><use href="#dll"/></svg>
<div class="t " style="top:132.52px;transform:scaleX(0.782);letter-spacing:0.5px;left:937.00px;color:#1f1f1f;">Emby.Server.CinemaMode.dll</div>
<div class="t r " style="top:132.52px;transform:scaleX(0.737);letter-spacing:0.5px;right:110.83px;color:#1f1f1f;">358 KB</div>
<div class="t " style="top:132.52px;transform:scaleX(0.810);letter-spacing:0.5px;left:1096.00px;color:#1f1f1f;">Application extension</div>
<div class="t " style="top:132.52px;transform:scaleX(0.784);letter-spacing:0.5px;left:1192.00px;color:#1f1f1f;">24/08/2023</div>
<svg class="i" style="left:925px;top:146.93999999999997px" width="9" height="12"><use href="#dll"/></svg>
<div class="t " style="top:145.64px;transform:scaleX(0.796);letter-spacing:0.5px;left:937.00px;color:#1f1f1f;">Emby.Webhooks.dll</div>
<div class="t r " style="top:145.64px;transform:scaleX(0.735);letter-spacing:0.5px;right:110.83px;color:#1f1f1f;">189 KB</div>
<div class="t " style="top:145.64px;transform:scaleX(0.810);letter-spacing:0.5px;left:1096.00px;color:#1f1f1f;">Application extension</div>
<div class="t " style="top:145.64px;transform:scaleX(0.784);letter-spacing:0.5px;left:1192.00px;color:#1f1f1f;">24/08/2023</div>
<svg class="i" style="left:925px;top:160.05999999999997px" width="9" height="12"><use href="#dll"/></svg>
<div class="t " style="top:158.76px;transform:scaleX(0.782);letter-spacing:0.5px;left:937.00px;color:#1f1f1f;">Emby.XmlTV.dll</div>
<div class="t r " style="top:158.76px;transform:scaleX(0.722);letter-spacing:0.5px;right:110.84px;color:#1f1f1f;">131 KB</div>
<div class="t " style="top:158.76px;transform:scaleX(0.810);letter-spacing:0.5px;left:1096.00px;color:#1f1f1f;">Application extension</div>
<div class="t " style="top:158.76px;transform:scaleX(0.784);letter-spacing:0.5px;left:1192.00px;color:#1f1f1f;">24/08/2023</div>
<svg class="i" style="left:925px;top:173.17999999999998px" width="9" height="12"><use href="#dll"/></svg>
<div class="t " style="top:171.88px;transform:scaleX(0.782);letter-spacing:0.5px;left:937.00px;color:#1f1f1f;">EmbyGuideData.dll</div>
<div class="t r " style="top:171.88px;transform:scaleX(0.736);letter-spacing:0.5px;right:110.83px;color:#1f1f1f;">87 KB</div>
<div class="t " style="top:171.88px;transform:scaleX(0.810);letter-spacing:0.5px;left:1096.00px;color:#1f1f1f;">Application extension</div>
<div class="t " style="top:171.88px;transform:scaleX(0.784);letter-spacing:0.5px;left:1192.00px;color:#1f1f1f;">24/08/2023</div>
<svg class="i" style="left:925px;top:186.29999999999998px" width="9" height="12"><use href="#dll"/></svg>
<div class="t " style="top:185.00px;transform:scaleX(0.802);letter-spacing:0.5px;left:937.00px;color:#1f1f1f;">Fanart.dll</div>
<div class="t r " style="top:185.00px;transform:scaleX(0.734);letter-spacing:0.5px;right:110.83px;color:#1f1f1f;">66.5 KB</div>
<div class="t " style="top:185.00px;transform:scaleX(0.810);letter-spacing:0.5px;left:1096.00px;color:#1f1f1f;">Application extension</div>
<div class="t " style="top:185.00px;transform:scaleX(0.784);letter-spacing:0.5px;left:1192.00px;color:#1f1f1f;">24/08/2023</div>
<svg class="i" style="left:925px;top:199.42px" width="9" height="12"><use href="#dll"/></svg>
<div class="t " style="top:198.12px;transform:scaleX(0.792);letter-spacing:0.5px;left:937.00px;color:#1f1f1f;">MovieDb.dll</div>
<div class="t r " style="top:198.12px;transform:scaleX(0.735);letter-spacing:0.5px;right:110.83px;color:#1f1f1f;">153 KB</div>
<div class="t " style="top:198.12px;transform:scaleX(0.810);letter-spacing:0.5px;left:1096.00px;color:#1f1f1f;">Application extension</div>
<div class="t " style="top:198.12px;transform:scaleX(0.784);letter-spacing:0.5px;left:1192.00px;color:#1f1f1f;">24/08/2023</div>
<svg class="i" style="left:925px;top:212.54px" width="9" height="12"><use href="#dll"/></svg>
<div class="t " style="top:211.24px;transform:scaleX(0.796);letter-spacing:0.5px;left:937.00px;color:#1f1f1f;">MusicBrainz.dll</div>
<div class="t r " style="top:211.24px;transform:scaleX(0.735);letter-spacing:0.5px;right:110.83px;color:#1f1f1f;">118 KB</div>
<div class="t " style="top:211.24px;transform:scaleX(0.810);letter-spacing:0.5px;left:1096.00px;color:#1f1f1f;">Application extension</div>
<div class="t " style="top:211.24px;transform:scaleX(0.784);letter-spacing:0.5px;left:1192.00px;color:#1f1f1f;">24/08/2023</div>
<svg class="i" style="left:925px;top:225.66px" width="9" height="12"><use href="#dll"/></svg>
<div class="t " style="top:224.36px;transform:scaleX(0.787);letter-spacing:0.5px;left:937.00px;color:#1f1f1f;">NfoMetadata.dll</div>
<div class="t r " style="top:224.36px;transform:scaleX(0.735);letter-spacing:0.5px;right:110.83px;color:#1f1f1f;">190 KB</div>
<div class="t " style="top:224.36px;transform:scaleX(0.810);letter-spacing:0.5px;left:1096.00px;color:#1f1f1f;">Application extension</div>
<div class="t " style="top:224.36px;transform:scaleX(0.784);letter-spacing:0.5px;left:1192.00px;color:#1f1f1f;">24/08/2023</div>
<svg class="i" style="left:925px;top:238.77999999999997px" width="9" height="12"><use href="#dll"/></svg>
<div class="t " style="top:237.48px;transform:scaleX(0.770);letter-spacing:0.5px;left:937.00px;color:#1f1f1f;">OMDb.dll</div>
<div class="t r " style="top:237.48px;transform:scaleX(0.741);letter-spacing:0.5px;right:110.83px;color:#1f1f1f;">50.5 KB</div>
<div class="t " style="top:237.48px;transform:scaleX(0.810);letter-spacing:0.5px;left:1096.00px;color:#1f1f1f;">Application extension</div>
<div class="t " style="top:237.48px;transform:scaleX(0.784);letter-spacing:0.5px;left:1192.00px;color:#1f1f1f;">24/08/2023</div>
<svg class="i" style="left:925px;top:251.89999999999998px" width="9" height="12"><use href="#dll"/></svg>
<div class="t " style="top:250.60px;transform:scaleX(0.795);letter-spacing:0.5px;left:937.00px;color:#1f1f1f;">OpenSubtitles.dll</div>
<div class="t r " style="top:250.60px;transform:scaleX(0.741);letter-spacing:0.5px;right:110.83px;color:#1f1f1f;">60.5 KB</div>
<div class="t " style="top:250.60px;transform:scaleX(0.810);letter-spacing:0.5px;left:1096.00px;color:#1f1f1f;">Application extension</div>
<div class="t " style="top:250.60px;transform:scaleX(0.784);letter-spacing:0.5px;left:1192.00px;color:#1f1f1f;">24/08/2023</div>
<svg class="i" style="left:925px;top:265.02px" width="9" height="12"><use href="#dll"/></svg>
<div class="t " style="top:263.72px;transform:scaleX(0.802);letter-spacing:0.5px;left:937.00px;color:#1f1f1f;">StudioImages.dll</div>
<div class="t r " style="top:263.72px;transform:scaleX(0.736);letter-spacing:0.5px;right:110.83px;color:#1f1f1f;">25 KB</div>
<div class="t " style="top:263.72px;transform:scaleX(0.810);letter-spacing:0.5px;left:1096.00px;color:#1f1f1f;">Application extension</div>
<div class="t " style="top:263.72px;transform:scaleX(0.784);letter-spacing:0.5px;left:1192.00px;color:#1f1f1f;">24/08/2023</div>
<svg class="i" style="left:925px;top:278.14px" width="9" height="12"><use href="#dll"/></svg>
<div class="t " style="top:276.84px;transform:scaleX(0.803);letter-spacing:0.5px;left:937.00px;color:#1f1f1f;">Tvdb.dll</div>
<div class="t r " style="top:276.84px;transform:scaleX(0.735);letter-spacing:0.5px;right:110.83px;color:#1f1f1f;">148 KB</div>
<div class="t " style="top:276.84px;transform:scaleX(0.810);letter-spacing:0.5px;left:1096.00px;color:#1f1f1f;">Application extension</div>
<div class="t " style="top:276.84px;transform:scaleX(0.784);letter-spacing:0.5px;left:1192.00px;color:#1f1f1f;">24/08/2023</div>
<div class="b" style="left:626px;top:37px;width:10px;height:580px;background:#f0f0f0;"></div>
<div class="b" style="left:626px;top:49px;width:10px;height:54px;background:#cdcdcd;"></div>
<div class="b" style="left:906px;top:37px;width:10px;height:580px;background:#f0f0f0;"></div>
<div class="b" style="left:906px;top:49px;width:10px;height:533px;background:#cdcdcd;"></div>
<svg class="i" style="left:628px;top:42px" width="6" height="4"><use href="#up"/></svg>
<svg class="i" style="left:628px;top:599px" width="6" height="4"><use href="#dn"/></svg>
<svg class="i" style="left:908px;top:42px" width="6" height="4"><use href="#up"/></svg>
<svg class="i" style="left:908px;top:599px" width="6" height="4"><use href="#dn"/></svg>
<div class="b" style="left:318px;top:607px;width:308px;height:10px;background:#f0f0f0;"></div>
<div class="b" style="left:330px;top:607px;width:171px;height:10px;background:#cdcdcd;"></div>
<div class="b" style="left:639px;top:607px;width:267px;height:10px;background:#f0f0f0;"></div>
<div class="b" style="left:649px;top:607px;width:199px;height:10px;background:#cdcdcd;"></div>
<div class="b" style="left:920px;top:607px;width:280px;height:10px;background:#f0f0f0;"></div>
<div class="b" style="left:932px;top:607px;width:194px;height:10px;background:#cdcdcd;"></div>
<svg class="i" style="left:322px;top:609.5px" width="4" height="6"><use href="#hl"/></svg>
<svg class="i" style="left:617.5px;top:609.5px" width="4" height="6"><use href="#hr"/></svg>
<svg class="i" style="left:641px;top:609.5px" width="4" height="6"><use href="#hl"/></svg>
<svg class="i" style="left:897.5px;top:609.5px" width="4" height="6"><use href="#hr"/></svg>
<svg class="i" style="left:924px;top:609.5px" width="4" height="6"><use href="#hl"/></svg>
<svg class="i" style="left:1194px;top:609.5px" width="4" height="6"><use href="#hr"/></svg>
</body></html>
